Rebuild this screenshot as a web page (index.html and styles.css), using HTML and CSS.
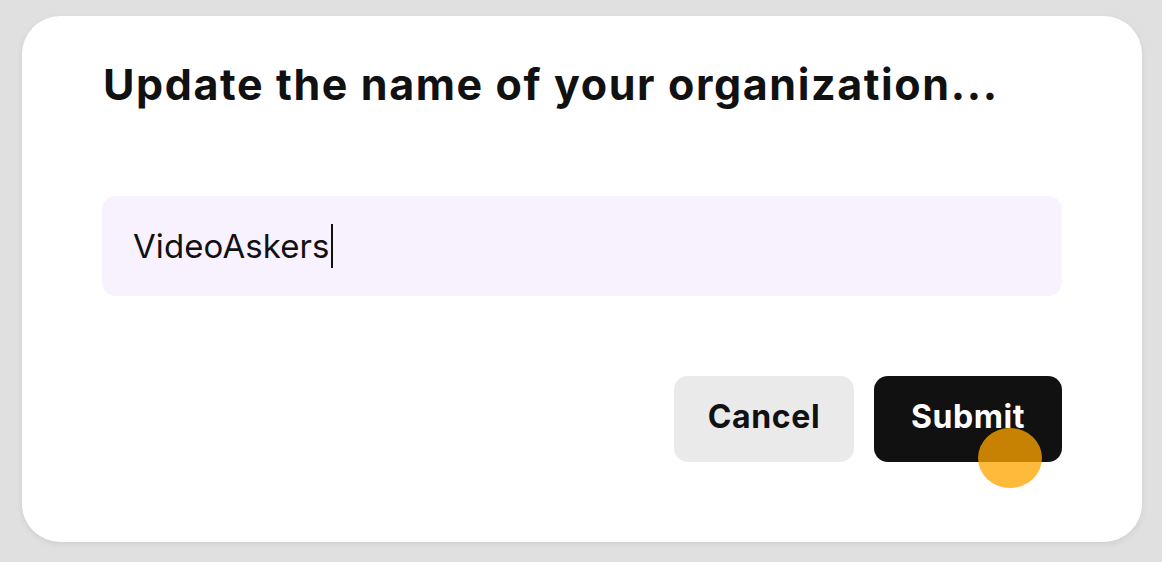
FILE: index.html
```html
<!DOCTYPE html>
<html>
<head>
<meta charset="utf-8">
<link rel="stylesheet" href="styles.css">
</head>
<body>
<div class="card">
  <h1 class="title">Update the name of your organization...</h1>
  <div class="field">
    <span class="value">VideoAskers</span><span class="caret"></span>
  </div>
  <div class="actions">
    <button class="btn btn-cancel">Cancel</button>
    <button class="btn btn-submit">Submit<span class="touch"></span></button>
  </div>
</div>
</body>
</html>
```

FILE: styles.css
```css
* { box-sizing: border-box; }
html, body { margin: 0; height: 100%; }
body {
  background: #e0e0e0;
  padding: 16px 20px 20px 22px;
  font-family: Inter, "Noto Sans", sans-serif;
  color: #111;
}
.card {
  width: 1120px;
  height: 526px;
  background: #fff;
  border-radius: 38px;
  box-shadow: 0 2px 6px rgba(0,0,0,0.08);
  padding: 40px 80px 80px 81px;
  display: flex;
  flex-direction: column;
}
.title {
  margin: 0;
  font-size: 43px;
  font-weight: 700;
  line-height: 56px;
  letter-spacing: 1.6px;
  color: #111;
}
.field {
  margin-top: 84px;
  height: 100px;
  background: #f7f2fe;
  border-radius: 14px;
  display: flex;
  align-items: center;
  padding-left: 31px;
  margin-left: -1px;
}
.value {
  font-size: 33px;
  font-weight: 400;
  letter-spacing: 0.1px;
  color: #111;
}
.caret {
  display: inline-block;
  width: 2px;
  height: 44px;
  background: #111;
  margin-left: 1px;
}
.actions {
  margin-top: auto;
  display: flex;
  justify-content: flex-end;
  gap: 20px;
}
.btn {
  height: 86px;
  border: 0;
  border-radius: 14px;
  font-family: Inter, "Noto Sans", sans-serif;
  font-size: 32px;
  font-weight: 700;
  letter-spacing: 0.6px;
  position: relative;
  padding: 0 0 6px 0;
}
.btn-cancel {
  width: 180px;
  background: #eaeaea;
  color: #111;
}
.btn-submit {
  width: 188px;
  background: #111;
  color: #fff;
}
.touch {
  position: absolute;
  left: 104px;
  top: 52px;
  width: 64px;
  height: 60px;
  border-radius: 50%;
  background: rgba(255,165,0,0.77);
}
```
